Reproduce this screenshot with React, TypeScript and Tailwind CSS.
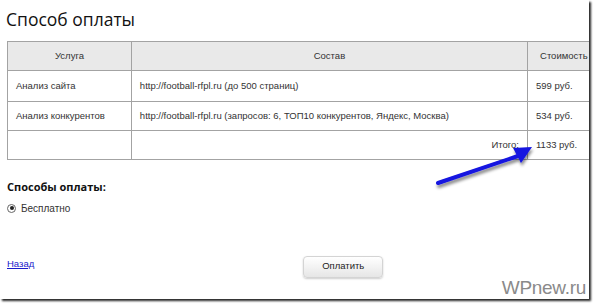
import React from "react";

export default function App() {
  const cell = "border border-[#a3a3a3] px-2 text-[9.5px] text-[#333]";
  return (
    <div className="w-[594px] h-[305px] bg-white relative overflow-hidden" style={{ fontFamily: "'Liberation Sans', Arial, sans-serif" }}>
      <div className="w-[589px] h-[299px] bg-white shadow-[2px_2px_2px_rgba(0,0,0,0.85)] overflow-hidden relative flex flex-col">
        <h1 className="pl-[6px] pt-[5px] h-[41px] text-[17.5px] text-[#111] leading-[28px]" style={{ fontFamily: "'Open Sans', 'Noto Sans', sans-serif" }}>
          Способ оплаты
        </h1>
        <table className="ml-[7px] w-[600px] border-collapse shrink-0">
          <colgroup>
            <col className="w-[124px]" />
            <col className="w-[397px]" />
            <col className="w-[79px]" />
          </colgroup>
          <tbody>
            <tr className="h-[29px] bg-[#e9e9e9]">
              <td className={cell + " text-center"}>Услуга</td>
              <td className={cell + " text-center"}>Состав</td>
              <td className={cell + " text-left pl-[12px]"}>Стоимость</td>
            </tr>
            <tr className="h-[31px]">
              <td className={cell}>Анализ сайта</td>
              <td className={cell}>http://football-rfpl.ru (до 500 страниц)</td>
              <td className={cell}>599 руб.</td>
            </tr>
            <tr className="h-[29px]">
              <td className={cell}>Анализ конкурентов</td>
              <td className={cell}>http://football-rfpl.ru (запросов: 6, ТОП10 конкурентов, Яндекс, Москва)</td>
              <td className={cell}>534 руб.</td>
            </tr>
            <tr className="h-[29px]">
              <td className={cell}></td>
              <td className={cell + " text-right"}>Итого:</td>
              <td className={cell}>1133 руб.</td>
            </tr>
          </tbody>
        </table>
        <div className="pl-[7px] pt-[19px] text-[11px] font-bold text-[#111]" style={{ fontFamily: "'Open Sans', 'Noto Sans', sans-serif" }}>
          Способы оплаты:
        </div>
        <div className="pl-[7px] pt-[5px] flex items-center gap-[5px] text-[10px] text-[#333]">
          <span className="w-[9px] h-[9px] rounded-full border border-[#666] flex items-center justify-center bg-white">
            <span className="w-[4px] h-[4px] rounded-full bg-[#222]" />
          </span>
          <span>Бесплатно</span>
        </div>
        <div className="flex items-start pt-[40px]">
          <a className="ml-[7px] mt-[1px] text-[9.5px] text-[#1a1acc] underline">Назад</a>
          <button className="ml-[269px] w-[80px] h-[22px] rounded-[4px] border border-[#d4d4d4] bg-gradient-to-b from-white to-[#e6e6e6] shadow-[0_1px_2px_rgba(0,0,0,0.2)] text-[9.5px] text-[#222]">
            Оплатить
          </button>
        </div>
        <div className="absolute right-[3px] bottom-[0px] text-[19px] text-[#8a8a8a] leading-[22px] tracking-[-0.3px]">
          WPnew.ru
        </div>
      </div>
      <svg className="absolute left-0 top-0" width="594" height="305" viewBox="0 0 594 305">
        <defs>
          <filter id="sh" x="-20%" y="-20%" width="140%" height="160%">
            <feDropShadow dx="1" dy="3" stdDeviation="1.5" floodColor="#000" floodOpacity="0.45" />
          </filter>
        </defs>
        <g filter="url(#sh)">
          <line x1="438" y1="183" x2="518" y2="156" stroke="#1414e0" strokeWidth="4" strokeLinecap="round" />
          <polygon points="532,147 513,148 521,163" fill="#1414e0" />
        </g>
      </svg>
    </div>
  );
}
